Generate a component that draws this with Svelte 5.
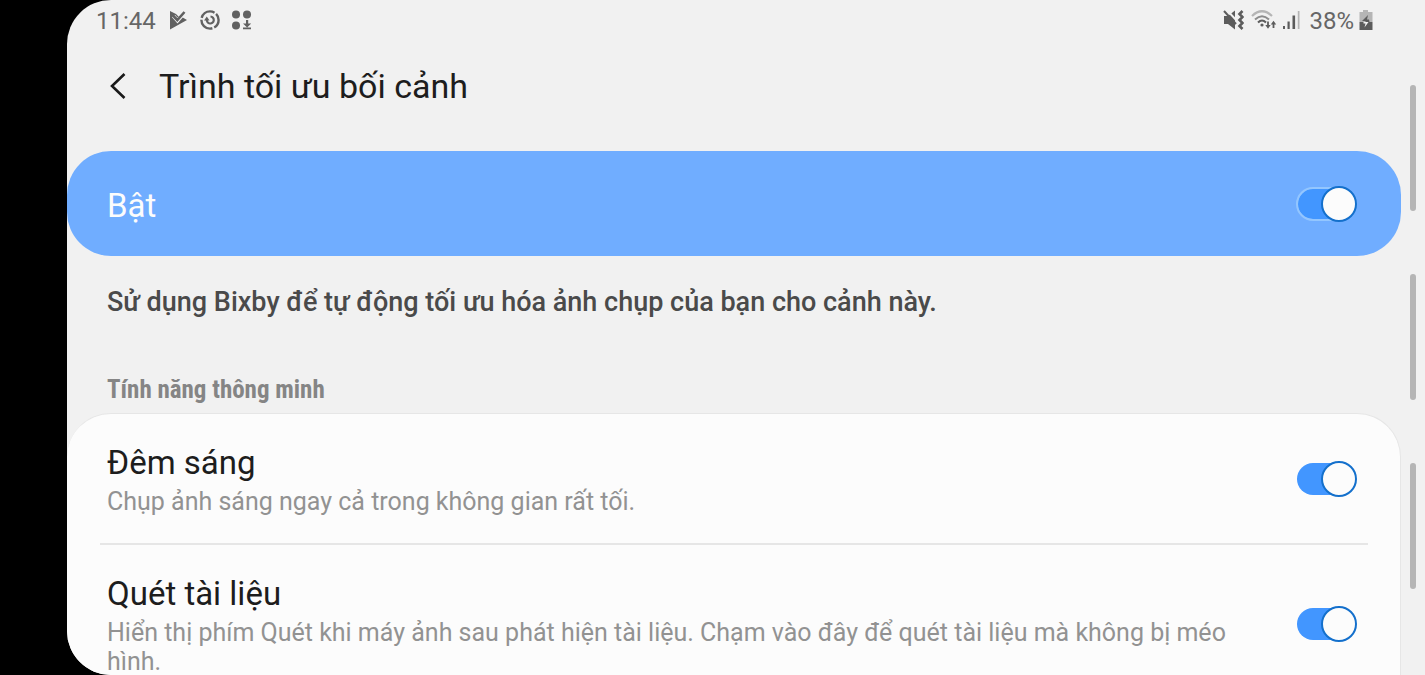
<script lang="ts">
	let enabled = $state(true);

	let features = $state([
		{
			id: 'bright-night',
			title: 'Đêm sáng',
			summary: 'Chụp ảnh sáng ngay cả trong không gian rất tối.',
			on: true
		},
		{
			id: 'document-scan',
			title: 'Quét tài liệu',
			summary:
				'Hiển thị phím Quét khi máy ảnh sau phát hiện tài liệu. Chạm vào đây để quét tài liệu mà không bị méo hình.',
			on: true
		}
	]);
</script>

<div class="device">
	<div class="screen">
		<div class="content">
			<div class="status-bar">
				<div class="status-left">
					<span class="time">11:44</span>
					<svg width="20" height="20" viewBox="0 0 20 20" aria-hidden="true">
						<path d="M2 1 L8 4 L10 6 L13 6.500 L19 10 L2 19.500 Z" fill="#616161" />
						<path d="M5.500 6 L9.500 10.500 L17 2" fill="none" stroke="#f1f1f1" stroke-width="4" />
						<path d="M5 5.500 L9.300 10 L16.500 2" fill="none" stroke="#616161" stroke-width="2.600" />
					</svg>
					<svg width="20" height="20" viewBox="0 0 20 20" fill="none" stroke="#616161" aria-hidden="true">
						<circle cx="10" cy="10" r="8.600" stroke-width="2.400" stroke-dasharray="16 2" stroke-dashoffset="7" />
						<path d="M6.800 9.500 A3.500 3.500 0 1 0 10.500 6.500" stroke-width="2.200" />
						<path d="M4 10.500 L6.800 6.500 L9.500 10.500 Z" fill="#616161" stroke="none" />
					</svg>
					<svg width="20" height="20" viewBox="0 0 20 20" fill="#616161" aria-hidden="true">
						<circle cx="4" cy="4.500" r="4" />
						<circle cx="15" cy="4.500" r="4" />
						<circle cx="4" cy="15.500" r="4" />
						<path d="M14 10 h2.200 v3.500 h3 L15.100 17.500 L11 13.500 h3 Z M11 17.400 h8 v1.900 h-8 Z" />
					</svg>
				</div>
				<div class="status-right">
					<svg width="21" height="20" viewBox="0 0 21 20" aria-hidden="true">
						<path d="M1 6 H5 L12 0.500 V19.500 L5 14 H1 Z" fill="#5c5c5c" />
						<path d="M3 -1 L14 11" stroke="#f1f1f1" stroke-width="2" />
						<path d="M1 1 L13 14" stroke="#5c5c5c" stroke-width="2" />
						<path
							d="M19.500 1 l-3 3 l3 3 l-3 3 l3 3 l-3 3 l3 3"
							fill="none"
							stroke="#5c5c5c"
							stroke-width="2.600"
						/>
					</svg>
					<svg class="wifi" width="26" height="20" viewBox="0 0 26 20" fill="none" aria-hidden="true">
						<path d="M1 6 Q11 -3.500 21 6" stroke="#b5b5b5" stroke-width="2.200" />
						<path d="M4 9.500 Q11 3 18 9.500" stroke="#8c8c8c" stroke-width="2" />
						<path d="M7 12.500 Q11 8.500 15 12.500" stroke="#5c5c5c" stroke-width="2" />
						<circle cx="11" cy="15" r="1.600" fill="#5c5c5c" />
						<path d="M17 11.500 V16 M22.500 18 V13" stroke="#5c5c5c" stroke-width="1.800" />
						<path d="M14.300 15 h5.400 l-2.700 3.700 Z M19.800 14.500 h5.400 l-2.700 -3.700 Z" fill="#5c5c5c" />
					</svg>
					<svg width="18" height="20" viewBox="0 0 18 20" aria-hidden="true">
						<path d="M1 16 h2 v3 h-2 Z M5.500 11.500 h2.200 v7.500 h-2.200 Z M10.500 5.500 h2.600 v13.500 h-2.600 Z" fill="#5c5c5c" />
						<path d="M15.800 1 h1.700 v18 h-1.700 Z" fill="#b5b5b5" />
					</svg>
					<span class="battery-level">38%</span>
					<svg width="14" height="20" viewBox="0 0 14 20" aria-hidden="true">
						<path d="M4 0 h5 v2 h4.500 v10 H0.500 V2 H4 Z" fill="#b5b5b5" />
						<path d="M0.500 12 h13 v8 h-13 Z" fill="#5c5c5c" />
						<path d="M9 5 L3 11 H6.500 V12 H10.500 L10 9.500 H8 Z" fill="#5c5c5c" />
						<path d="M4.500 12 H9.500 L5.500 17.500 L6.500 13.500 H4.500 Z" fill="#f1f1f1" />
					</svg>
				</div>
			</div>

			<header class="app-bar">
				<button class="back" type="button" aria-label="Quay lại">
					<svg width="18" height="26" viewBox="0 0 18 26" aria-hidden="true">
						<path d="M15.500 1 L3 13 L15.500 25" fill="none" stroke="#1a1a1a" stroke-width="2.600" />
					</svg>
				</button>
				<h1>Trình tối ưu bối cảnh</h1>
			</header>

			<main>
				<div class="master">
					<label for="master-switch">Bật</label>
					<input id="master-switch" class="switch" type="checkbox" role="switch" bind:checked={enabled} />
				</div>

				<p class="intro">Sử dụng Bixby để tự động tối ưu hóa ảnh chụp của bạn cho cảnh này.</p>

				<h2>Tính năng thông minh</h2>
				<div class="card">
					{#each features as feature (feature.id)}
						<div class="row">
							<div class="row-text">
								<label for={feature.id}>{feature.title}</label>
								<p>{feature.summary}</p>
							</div>
							<input id={feature.id} class="switch" type="checkbox" role="switch" bind:checked={feature.on} />
						</div>
					{/each}
				</div>
			</main>
		</div>

		<div class="edge-rail" aria-hidden="true">
			<span class="handle"></span>
			<span class="handle"></span>
			<span class="handle"></span>
		</div>
	</div>
</div>

<style>
	:global(body) {
		margin: 0;
		background: #000;
	}

	.device {
		height: 100vh;
		padding-left: 67px;
		box-sizing: border-box;
		background: #000;
		font-family: Roboto, 'Noto Sans', sans-serif;
		color: #1d1d1d;
	}

	.screen {
		display: flex;
		height: 100%;
		overflow: hidden;
		background: #f1f1f1;
		border-radius: 44px 0 0 44px;
	}

	.content {
		flex: 1;
		min-width: 0;
	}

	/* Status bar */
	.status-bar {
		display: flex;
		justify-content: space-between;
		align-items: center;
		height: 40px;
		padding: 0 28px 0 29px;
		font-size: 24px;
		color: #666;
	}

	.status-left,
	.status-right {
		display: flex;
		align-items: center;
	}

	.status-left {
		gap: 12px;
	}

	.status-right {
		gap: 5px;
	}

	.wifi {
		margin-left: 2px;
	}

	.time,
	.battery-level {
		padding-top: 2px;
	}

	.battery-level {
		margin-left: 4px;
	}

	/* Title */
	.app-bar {
		display: flex;
		align-items: center;
		height: 92px;
		padding-left: 42px;
		margin-bottom: 19px;
	}

	.back {
		display: flex;
		width: 50px;
		padding: 0;
		border: 0;
		background: none;
		cursor: pointer;
	}

	h1 {
		margin: 0;
		font-size: 34px;
		font-weight: 400;
	}

	/* Master switch */
	.master {
		display: flex;
		justify-content: space-between;
		align-items: center;
		height: 105px;
		padding: 0 45px 0 40px;
		background: #70adff;
		border-radius: 44px;
	}

	.master label {
		padding-top: 3px;
		font-size: 33px;
		color: #fcfcfc;
	}

	.intro {
		margin: 28px 40px 55px;
		font-size: 27px;
		line-height: 36px;
		font-weight: 500;
		color: #4a4a4a;
	}

	h2 {
		margin: 0 40px 8px;
		font-family: 'Roboto Condensed', Roboto, sans-serif;
		font-size: 25px;
		line-height: 30px;
		font-weight: 700;
		color: #858585;
	}

	/* Feature list */
	.card {
		border: 1px solid #e6e6e6;
		border-left: 0;
		border-bottom: 0;
		border-radius: 44px 44px 0 0;
		background: #fcfcfc;
	}

	.row {
		display: flex;
		justify-content: space-between;
		align-items: center;
		gap: 28px;
		margin: 0 32px 0 33px;
		padding: 0 12px 0 7px;
	}

	.row + .row {
		border-top: 2px solid #e6e6e6;
	}

	.row-text {
		padding: 29px 0 27px;
	}

	.row-text label {
		display: block;
		margin-bottom: 4px;
		font-size: 33px;
		line-height: 40px;
	}

	.row-text p {
		margin: 0;
		font-size: 25px;
		line-height: 29px;
		color: #929292;
	}

	/* Switch */
	.switch {
		appearance: none;
		display: flex;
		align-items: center;
		flex: none;
		box-sizing: border-box;
		width: 60px;
		height: 34px;
		margin: 0;
		border: 1px solid transparent;
		border-radius: 17px;
		background: #c4c4c4;
		background-clip: padding-box;
		cursor: pointer;
	}

	/* the thumb is a little taller than its track */
	.switch::before {
		content: '';
		box-sizing: border-box;
		flex: none;
		width: 36px;
		height: 36px;
		margin: 0 -2px;
		border: 2px solid #1470cc;
		border-radius: 50%;
		background: #fcfcfc;
	}

	.switch:checked {
		justify-content: flex-end;
		background-color: #4296ff;
	}

	.master .switch {
		border: 2px solid #93c6ff;
	}

	.master .switch::before {
		margin: 0 -3px;
	}

	/* Edge handles */
	.edge-rail {
		display: flex;
		flex-direction: column;
		align-items: center;
		gap: 63px;
		width: 24px;
		padding-top: 85px;
	}

	.handle {
		flex: none;
		width: 6px;
		height: 126px;
		border-radius: 3px;
		background: #b5b5b5;
	}
</style>
